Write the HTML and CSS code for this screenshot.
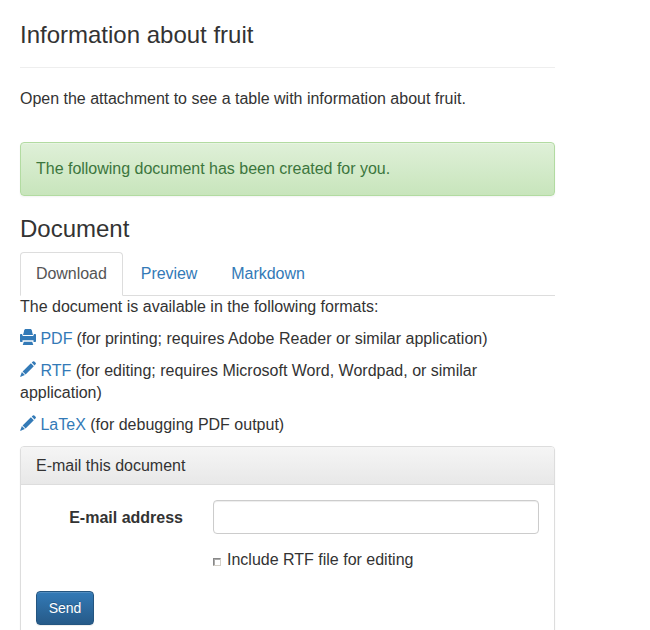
FILE: index.html
```html
<!DOCTYPE html>
<html lang="en">
<head>
<meta charset="utf-8">
<title>Information about fruit</title>
<link rel="stylesheet" href="styles.css">
</head>
<body>
<svg class="defs" width="0" height="0">
  <symbol id="print" viewBox="0 0 16 16"><path d="M5.200 0h5.600Q12 .3 12.300 3.500L13 6H3L3.700 3.500Q4 .3 5.200 0zM0 5.800Q0 5 .8 5H2L2.800 7H13.200L14 5h1.200q.8 0 .8.800V12.200q0 .8-.8.800H13.500V11.200H2.500V13H.8Q0 13 0 12.200zM3.800 12.800h8.400L13.300 16H2.700z"/></symbol>
  <symbol id="pencil" viewBox="0 0 16 16"><path d="M12.900 .500Q13.600-.1 14.300.5L15.600 1.800Q16.300 2.500 15.600 3.200L14.500 4.400 11.700 1.600zM10.900 2.300L13.800 5.200 5.600 13.400 2.600 10.400zM1.900 11.100L4.900 14.100 0 16z"/></symbol>
</svg>
<main class="container">
  <h1 class="question-title">Information about fruit</h1>
  <p class="intro">Open the attachment to see a table with information about fruit.</p>
  <div class="alert">The following document has been created for you.</div>
  <h2 class="section-title">Document</h2>
  <ul class="tabs">
    <li><a class="tab active" href="#">Download</a></li>
    <li><a class="tab" href="#">Preview</a></li>
    <li><a class="tab" href="#">Markdown</a></li>
  </ul>
  <div class="formats">
    <p>The document is available in the following formats:</p>
    <p><a href="#"><svg class="icon"><use href="#print"/></svg> PDF</a> <span class="print-note">(for printing; requires Adobe Reader or similar application)</span></p>
    <p><a href="#"><svg class="icon"><use href="#pencil"/></svg> RTF</a> (for editing; requires Microsoft Word, Wordpad, or similar application)</p>
    <p><a href="#"><svg class="icon"><use href="#pencil"/></svg> LaTeX</a> (for debugging PDF output)</p>
  </div>
  <section class="panel">
    <h3 class="panel-heading">E-mail this document</h3>
    <form class="panel-body">
      <div class="field">
        <label class="label" for="email">E-mail address</label>
        <input class="input" id="email" type="text">
      </div>
      <label class="check"><span class="box"></span>Include RTF file for editing</label>
      <button class="send" type="button">Send</button>
    </form>
  </section>
</main>
</body>
</html>
```

FILE: styles.css
```css
* { box-sizing: border-box; }
html { overflow: hidden; }
body {
  margin: 0;
  background: #fff;
  color: #333;
  font: 16px/22px "Liberation Sans", Arial, sans-serif;
}
.defs { position: absolute; }
.container { width: 535px; margin-left: 20px; padding-top: 20px; }
a { color: #337ab7; text-decoration: none; }
h1, h2, h3, p, ul { margin: 0; padding: 0; font-weight: 400; }
.question-title {
  height: 48px;
  border-bottom: 1px solid #eee;
  font-size: 24px;
  line-height: 30px;
}
.intro { margin-top: 20px; letter-spacing: -.01px; }
.alert {
  height: 54px;
  margin-top: 32px;
  padding: 15px;
  border: 1px solid #b2dba1;
  border-radius: 4px;
  background: linear-gradient(#dff0d8, #c8e5bc);
  box-shadow: inset 0 1px 0 rgba(255,255,255,.25), 0 1px 2px rgba(0,0,0,.05);
  color: #3c763d;
  letter-spacing: -.015px;
}
.section-title { margin-top: 18px; font-size: 24px; line-height: 30px; }
.tabs { display: flex; margin-top: 8px; border-bottom: 1px solid #ddd; list-style: none; letter-spacing: -.05px; }
.tabs li { margin: 0 2px -1px 0; }
.tab { display: block; height: 44px; padding: 10px 15px; border: 1px solid transparent; border-radius: 4px 4px 0 0; }
.active { border-color: #ddd #ddd #fff; background: #fff; color: #555; }
.formats p { margin-bottom: 10px; }
.print-note { margin-left: -.5px; letter-spacing: .02px; }
.icon { width: 16px; height: 16px; fill: currentColor; vertical-align: -1px; }
.panel { border: 1px solid #ddd; border-radius: 4px; box-shadow: 0 1px 2px rgba(0,0,0,.05); }
.panel-heading {
  height: 38px;
  padding: 8px 15px;
  border-bottom: 1px solid #ddd;
  border-radius: 3px 3px 0 0;
  background: linear-gradient(#f5f5f5, #e8e8e8);
  font-size: 16px;
  line-height: 22px;
}
.panel-body { padding: 15px; }
.field { display: grid; grid-template-columns: 147px 326px; column-gap: 30px; align-items: center; }
.label { padding-top: 2px; font-weight: 700; text-align: right; }
.input { width: 100%; height: 34px; border: 1px solid #ccc; border-radius: 4px; background: #fff; box-shadow: inset 0 1px 1px rgba(0,0,0,.075); }
.check { display: flex; align-items: center; gap: 6px; margin: 15px 0 20px 177px; }
.box { width: 8px; height: 8px; margin-top: 4px; border: 1px solid #d4d0c8; border-top-color: #888; border-left-color: #888; box-shadow: inset 1px 1px 0 #aaa; }
.send {
  display: block;
  width: 58px;
  height: 34px;
  padding: 0;
  border: 1px solid #245580;
  border-radius: 4px;
  background: linear-gradient(#337ab7, #265a88);
  box-shadow: inset 0 1px 0 rgba(255,255,255,.15), 0 1px 1px rgba(0,0,0,.075);
  color: #fff;
  font: 14px/20px "Liberation Sans", Arial, sans-serif;
  text-shadow: 0 -1px 0 rgba(0,0,0,.2);
}
```
